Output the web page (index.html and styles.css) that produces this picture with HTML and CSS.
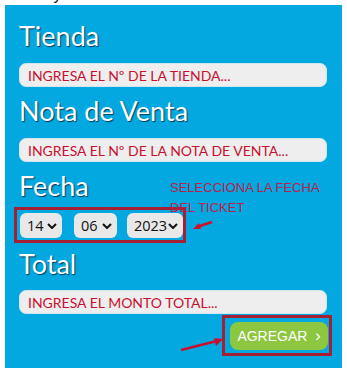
FILE: index.html
```html
<!DOCTYPE html>
<html lang="es">
<head>
    <meta charset="utf-8">
    <title>Agregar Ticket</title>
    <link rel="stylesheet" href="styles.css">
</head>
<body>
    <div class="intro"><p>Venta y el Total en la Nota de Venta.</p></div>
    <form class="panel">
        <h2 class="label">Tienda</h2>
        <input class="field" type="text" placeholder="INGRESA EL Nº DE LA TIENDA...">

        <h2 class="label">Nota de Venta</h2>
        <input class="field" type="text" placeholder="INGRESA EL Nº DE LA NOTA DE VENTA...">

        <h2 class="label">Fecha</h2>
        <div class="date-row">
            <div class="pick w-day">
                <select><option>14</option></select>
                <svg class="chev" viewBox="0 0 10 6" width="10" height="6"><path d="M1 1l4 4 4-4" fill="none" stroke="#111" stroke-width="2"/></svg>
            </div>
            <div class="pick w-month">
                <select><option>06</option></select>
                <svg class="chev" viewBox="0 0 10 6" width="10" height="6"><path d="M1 1l4 4 4-4" fill="none" stroke="#111" stroke-width="2"/></svg>
            </div>
            <div class="pick w-year">
                <select><option>2023</option></select>
                <svg class="chev" viewBox="0 0 10 6" width="10" height="6"><path d="M1 1l4 4 4-4" fill="none" stroke="#111" stroke-width="2"/></svg>
            </div>
        </div>
        <div class="note">SELECCIONA LA FECHA<br>DEL TICKET</div>
        <svg class="arrow arrow-date" width="24" height="12" viewBox="0 0 24 12"><path d="M21 3L6 8" stroke="#d0102a" stroke-width="2.5"/><path d="M2 10l6-6 2 6z" fill="#d0102a"/></svg>

        <h2 class="label label-total">Total</h2>
        <input class="field field-total" type="text" placeholder="INGRESA EL MONTO TOTAL...">

        <div class="actions">
            <div class="mark">
                <button class="add" type="button">AGREGAR <span class="gt">&rsaquo;</span></button>
            </div>
        </div>
        <svg class="arrow arrow-btn" width="46" height="16" viewBox="0 0 46 16"><path d="M2 14L38 5" stroke="#c8102e" stroke-width="2.5"/><path d="M44 3l-9-1 2 8z" fill="#c8102e"/></svg>
    </form>
</body>
</html>
```

FILE: styles.css
```css
body {
    margin: 0;
    background-color: #ffffff;
    font-family: Lato, "Open Sans", sans-serif;
}

.intro {
    height: 5px;
    overflow: hidden;
}

.intro p {
    margin: -14px 0 0 8px;
    font-family: "Liberation Sans", Arial, sans-serif;
    font-size: 16px;
    line-height: 18px;
    color: #222;
}

.panel {
    position: relative;
    margin: 0 5px;
    width: 337px;
    box-sizing: border-box;
    padding: 17px 15px 12px 14px;
    background-color: #02a8df;
    display: flex;
    flex-direction: column;
}

.panel > * {
    flex-shrink: 0;
}

.label {
    margin: 10px 0 0;
    font-size: 27px;
    line-height: 28px;
    font-weight: 400;
    color: #ffffff;
    text-shadow: 1px 1px 1px rgba(0, 30, 60, 0.8);
}

.label:first-child {
    margin-top: 0;
}

.field {
    margin: 13px 0 0;
    height: 24px;
    box-sizing: border-box;
    border: 1px solid #cfe6f0;
    border-radius: 7px;
    background-color: #eeeeee;
    padding: 0 8px;
    font-family: Lato, sans-serif;
    font-size: 14px;
}

.field::placeholder {
    color: #c8102e;
    opacity: 1;
}

.label-total {
    margin-top: 7px;
}

.field-total {
    margin-top: 12px;
}

.date-row {
    align-self: flex-start;
    margin: 7px 0 0 -5px;
    display: flex;
    gap: 12px;
    padding: 3px 0 2px 3px;
    border: 3px solid #a52034;
}

.pick {
    position: relative;
    height: 25px;
}

.w-day { width: 42px; }
.w-month { width: 43px; margin-right: -2px; }
.w-year { width: 56px; }

.pick select {
    appearance: none;
    width: 100%;
    height: 100%;
    border: none;
    border-radius: 6px;
    background-color: #e8e8e8;
    padding: 0 0 0 7px;
    font-family: "Open Sans", sans-serif;
    font-size: 14.5px;
    color: #111;
}

.chev {
    position: absolute;
    right: 5px;
    top: 10px;
    pointer-events: none;
}

.note {
    position: absolute;
    left: 165px;
    top: 173px;
    font-family: "Liberation Sans", Arial, sans-serif;
    font-size: 13px;
    line-height: 20px;
    color: #b8214c;
}

.arrow {
    position: absolute;
}

.arrow-date {
    left: 186px;
    top: 214px;
}

.arrow-btn {
    left: 174px;
    top: 331px;
}

.actions {
    display: flex;
    justify-content: flex-end;
    margin: 1px -5px 0 0;
}

.mark {
    border: 3px solid #a52034;
    padding: 4px 1px 3px 5px;
}

.add {
    display: block;
    width: 98px;
    height: 28px;
    border: none;
    border-radius: 8px;
    background-color: #8dc63f;
    color: #ffffff;
    font-family: "Liberation Sans", Arial, sans-serif;
    font-size: 14px;
    padding: 0;
}

.gt {
    margin-left: 4px;
    font-size: 16px;
}
```
